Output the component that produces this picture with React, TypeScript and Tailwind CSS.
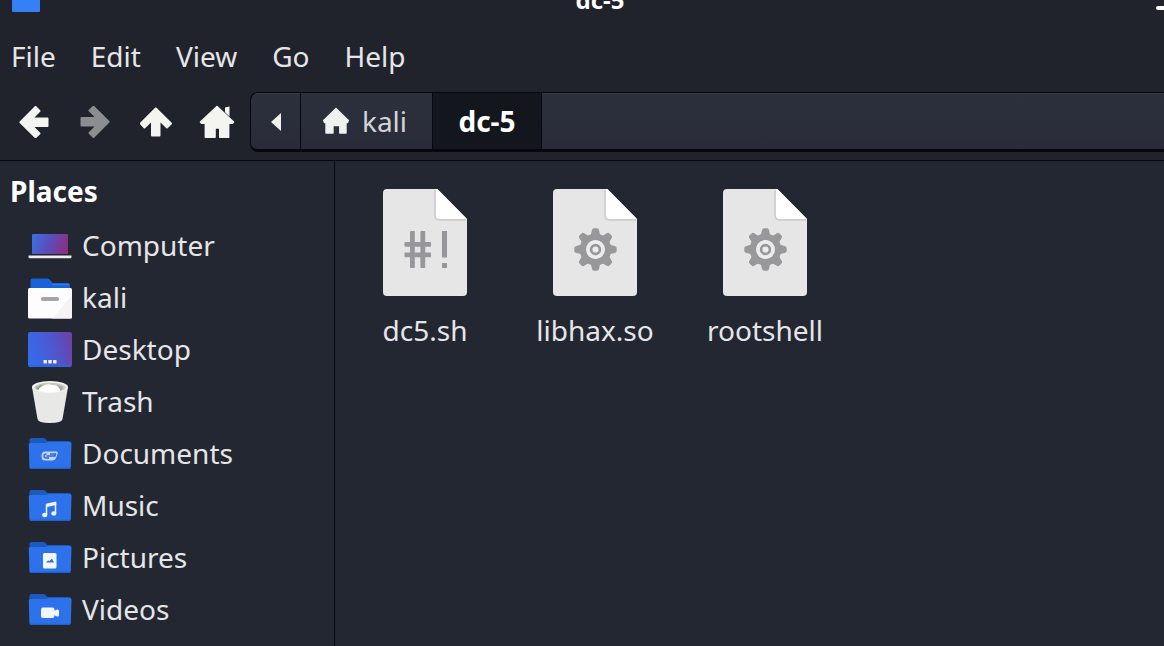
import type { ReactNode } from "react";

const menus = ["File", "Edit", "View", "Go", "Help"];

const arrowPath = "M17.5 1 L21.5 5 L14 12.5 H29.5 V20 H14 L21.5 27.5 L17.5 31.2 L2.4 16.2 Z";

function ArrowIcon({ className }: { className: string }) {
  return (
    <svg viewBox="0 0 32 32" className={className} aria-hidden="true">
      <path d={arrowPath} fill="currentColor" stroke="currentColor" strokeWidth="2" strokeLinejoin="round" />
    </svg>
  );
}

function HomeIcon() {
  return (
    <svg viewBox="0 0 36 34" className="h-[34px] w-9" fill="currentColor" aria-hidden="true">
      <path d="M26 2.5 L30.5 1.5 V11.5 L26 7.2 Z" />
      <path
        d="M18 1.5 L34.5 17 L33.4 18.2 H29.6 V32.2 H20.8 V23 H16 V32.2 H6.4 V18.2 H2.6 L1.5 17 Z"
        stroke="currentColor"
        strokeWidth="1.6"
        strokeLinejoin="round"
      />
    </svg>
  );
}

function SmallHomeIcon() {
  return (
    <svg viewBox="0 0 28 28" className="size-7" fill="currentColor" aria-hidden="true">
      <path
        d="M14 1.5 L26.3 13.5 L25.5 15.5 H24 V26 H17.8 V18.5 H11 V26 H4 V15.5 H2.5 L1.7 13.5 Z"
        stroke="currentColor"
        strokeWidth="1.4"
        strokeLinejoin="round"
      />
    </svg>
  );
}

function ComputerIcon() {
  return (
    <svg viewBox="0 0 44 44" className="size-11" aria-hidden="true">
      <defs>
        <linearGradient id="screen" x1="0" y1="0.4" x2="1" y2="0.6">
          <stop offset="0" stopColor="#3f6be0" />
          <stop offset="0.5" stopColor="#5d4bb5" />
          <stop offset="1" stopColor="#8c2f83" />
        </linearGradient>
      </defs>
      <path d="M4 12 a1 1 0 0 1 1-1 H39 a1 1 0 0 1 1 1 V32 H4 Z" fill="url(#screen)" />
      <path d="M4 31 H40 V32.5 H4 Z" fill="#22252f" />
      <path d="M0.5 32.5 H43.5 V34 a1.2 1.2 0 0 1 -1.2 1.2 H1.7 A1.2 1.2 0 0 1 0.5 34 Z" fill="#ededf0" />
    </svg>
  );
}

function HomeFolderIcon() {
  return (
    <svg viewBox="0 0 44 44" className="size-11" aria-hidden="true">
      <path d="M2.5 5.5 Q2.5 3.5 4.5 3.5 H19 Q21 3.5 22 5 L24.5 8 H40 Q42 8 42 10 V16 H2.5 Z" fill="#1b62d8" />
      <path d="M24 9.5 H41" stroke="#2e7cf2" strokeWidth="1.4" />
      <rect x="0" y="13" width="44" height="30.5" rx="1.5" fill="#fdfdfd" />
      <path d="M44 20 V42 a1.5 1.5 0 0 1 -1.5 1.5 H24 Z" fill="#f4f4f5" />
      <rect x="13" y="22" width="18" height="4" rx="1.8" fill="#a3a3a9" />
    </svg>
  );
}

function DesktopIcon() {
  return (
    <svg viewBox="0 0 44 44" className="size-11" aria-hidden="true">
      <defs>
        <linearGradient id="desk" x1="0" y1="0.6" x2="1" y2="0.35">
          <stop offset="0" stopColor="#346bec" />
          <stop offset="0.5" stopColor="#4a5bd3" />
          <stop offset="1" stopColor="#6a42ab" />
        </linearGradient>
      </defs>
      <rect x="0" y="5" width="44" height="35" rx="2" fill="url(#desk)" />
      <path d="M1 39 H43" stroke="#2c66de" strokeWidth="1.4" />
      <rect x="15.5" y="33" width="3.4" height="3.4" rx="0.6" fill="#f1f1f8" />
      <rect x="20.3" y="33" width="3.4" height="3.4" rx="0.6" fill="#f1f1f8" />
      <rect x="25.1" y="33" width="3.4" height="3.4" rx="0.6" fill="#f1f1f8" />
    </svg>
  );
}

function TrashIcon() {
  return (
    <svg viewBox="0 0 44 44" className="size-11" aria-hidden="true">
      <path d="M4 8 L9.5 40 Q10 44 22 44 Q34 44 34.5 40 L40 8 Z" fill="#e8e8e6" />
      <ellipse cx="22" cy="8" rx="18" ry="6" fill="#f2f2f0" />
      <ellipse cx="22" cy="8.4" rx="15.5" ry="4.6" fill="#c9c6bd" />
      <path d="M8 9 L13 5.5 L16 8 L11 12 Z" fill="#7fa98f" />
      <path d="M29 6 L35 8 L34 11 L30 12 Z" fill="#8fb3a0" />
      <path d="M11 6 L15 4.8 L18 7 Z" fill="#d8bd7c" />
      <path d="M10 12 Q11 8 15 7 Q19 4 24 6 Q30 6 31 9 Q33 11 32 12.4 Q22 14.6 10 12 Z" fill="#ffffff" />
    </svg>
  );
}

function FolderIcon({ children }: { children: ReactNode }) {
  return (
    <svg viewBox="0 0 44 44" className="size-11" aria-hidden="true">
      <path d="M1.5 9 Q1.5 7 3.5 7 H15 Q16.5 7 17.5 8 L19.5 10 H41 Q43 10 43 12 V20 H1.5 Z" fill="#1c5ac0" />
      <path d="M0.8 13.5 Q0.8 12 2.3 12 H16 Q18 12 19 11.4 Q20 11 21.5 11 H42 Q43.5 11 43.5 12.5 L42.8 36 Q42.7 38 41 38 H3.2 Q1.5 38 1.4 36 Z" fill="#2d72ea" />
      <path d="M2 37.3 H42" stroke="#2060cf" strokeWidth="1.2" />
      {children}
    </svg>
  );
}

function FileShape({ children }: { children: ReactNode }) {
  return (
    <svg viewBox="0 0 84 107" className="h-[107px] w-[84px]" aria-hidden="true">
      <path d="M4 0 H54 L84 30 V103 a4 4 0 0 1 -4 4 H4 a4 4 0 0 1 -4 -4 V4 a4 4 0 0 1 4 -4 Z" fill="#e6e6e7" />
      <path d="M52 1 V26 Q52 31 57 31 H83" fill="none" stroke="#c9c9cc" strokeWidth="1.4" />
      <path d="M53 0 H54.5 L84 30 H57 Q53 30 53 26 Z" fill="#ffffff" />
      {children}
    </svg>
  );
}

function ScriptFileIcon() {
  return (
    <FileShape>
      <g fill="#97979b">
        <rect x="27" y="42" width="4.8" height="37" rx="0.8" />
        <rect x="37.4" y="42" width="4.8" height="37" rx="0.8" />
        <rect x="21.5" y="53" width="26.5" height="4.8" rx="0.8" />
        <rect x="21.5" y="63.5" width="26.5" height="4.8" rx="0.8" />
        <rect x="59" y="42" width="5" height="26.5" />
        <rect x="59" y="74" width="5" height="5" />
      </g>
    </FileShape>
  );
}

function GearFileIcon() {
  const teeth = [0, 45, 90, 135, 180, 225, 270, 315];
  return (
    <FileShape>
      <g transform="translate(42.5 60.5)">
        {teeth.map((angle) => (
          <path
            key={angle}
            d="M-6 -13 Q-4 -15 -3.6 -19 Q-3.2 -21.2 -1.5 -21.2 H1.5 Q3.2 -21.2 3.6 -19 Q4 -15 6 -13 Z"
            fill="#98989b"
            transform={`rotate(${angle})`}
          />
        ))}
        <circle r="12.5" fill="none" stroke="#98989b" strokeWidth="6.6" />
        <circle r="9.4" fill="#ececec" />
        <circle r="4.4" fill="none" stroke="#98989b" strokeWidth="2.6" />
      </g>
    </FileShape>
  );
}

const places = [
  { name: "Computer", icon: <ComputerIcon /> },
  { name: "kali", icon: <HomeFolderIcon /> },
  { name: "Desktop", icon: <DesktopIcon /> },
  { name: "Trash", icon: <TrashIcon /> },
  {
    name: "Documents",
    icon: (
      <FolderIcon>
        <path d="M17 20.5 H28 Q30.5 20.5 29.5 23 L28 27 Q27 29.5 24.5 29.5 H17 Q13.5 29.5 13.5 25 Q13.5 20.5 17 20.5 Z" fill="#bfd5fa" />
        <path d="M18.5 23 Q16 23 16 25 Q16 27 18.5 27 H21 M18.5 25 H27 L27.5 23 H22" fill="none" stroke="#2d66d0" strokeWidth="1.4" />
      </FolderIcon>
    ),
  },
  {
    name: "Music",
    icon: (
      <FolderIcon>
        <path d="M18.5 32 V22 L27.5 20 V30" fill="none" stroke="#eef4ff" strokeWidth="1.5" />
        <path d="M18 20.8 L28.2 18.5 V22 L18 24.3 Z" fill="#eef4ff" />
        <ellipse cx="16.7" cy="32" rx="2.6" ry="2.2" fill="#eef4ff" />
        <ellipse cx="25.8" cy="30.4" rx="2.6" ry="2.2" fill="#eef4ff" />
      </FolderIcon>
    ),
  },
  {
    name: "Pictures",
    icon: (
      <FolderIcon>
        <rect x="15" y="18" width="13.5" height="15.5" rx="1.5" fill="#f2f6ff" />
        <path d="M18 27.5 L20 25.5 L21.5 26 L24 23.5 L26 27.5 Z" fill="#3f6fc4" />
      </FolderIcon>
    ),
  },
  {
    name: "Videos",
    icon: (
      <FolderIcon>
        <rect x="13" y="20.5" width="13.5" height="10.5" rx="2" fill="#f2f6ff" />
        <path d="M26 24 L29 22.5 Q31 22 31 24 V28 Q31 30 29 29.5 L26 28 Z" fill="#f2f6ff" />
      </FolderIcon>
    ),
  },
];

const files = [
  { name: "dc5.sh", icon: <ScriptFileIcon /> },
  { name: "libhax.so", icon: <GearFileIcon /> },
  { name: "rootshell", icon: <GearFileIcon /> },
];

function TitleBar() {
  return (
    <header className="flex h-3 items-end overflow-hidden pl-3">
      <svg viewBox="0 0 28 24" className="h-6 w-7 shrink-0" aria-hidden="true">
        <path d="M0 2 a2 2 0 0 1 2 -2 H26 a2 2 0 0 1 2 2 V23 a1 1 0 0 1 -1 1 H1 a1 1 0 0 1 -1 -1 Z" fill="#3680f5" />
      </svg>
      <h1 className="flex-1 pl-1 text-center text-2xl/6 font-bold text-white">dc-5</h1>
      <button type="button" aria-label="Minimize" className="flex h-3 w-2 items-center pt-1">
        <span className="h-1 w-full rounded-l-sm bg-white" />
      </button>
    </header>
  );
}

function PathBar() {
  return (
    <nav
      aria-label="Path"
      className="ml-[3px] flex h-[60px] flex-1 overflow-hidden rounded-l-lg border border-r-0 border-b-3 border-[#07080d] bg-linear-to-b from-[#2c303d] to-[#292c38] text-[#f0f0ee]"
    >
      <button type="button" aria-label="Scroll left" className="flex w-[49px] items-center justify-center border-t border-[#363a47]">
        <svg viewBox="0 0 12 20" className="h-5 w-3" aria-hidden="true">
          <path d="M11 1 V19 L1 10 Z" fill="currentColor" />
        </svg>
      </button>
      <button
        type="button"
        className="flex w-[132px] items-center justify-center gap-3 border-l border-[#07080d] pr-1 text-[#d3d4d8]"
      >
        <span className="text-[#f0f0ee]">
          <SmallHomeIcon />
        </span>
        kali
      </button>
      <button
        type="button"
        aria-current="page"
        className="w-[110px] border-x border-[#07080d] bg-[#14161e] font-bold text-white"
      >
        dc-5
      </button>
      <div className="flex-1 border-t border-[#363a47]" />
    </nav>
  );
}

export default function App() {
  return (
    <div className="flex min-h-screen flex-col overflow-hidden bg-[#20232c] font-['Noto_Sans',sans-serif] text-[28px]/9 text-[#e6e6e8]">
      <TitleBar />

      <nav aria-label="Menu" className="flex gap-[35px] px-[11px] pt-[26px] pb-[18px]">
        {menus.map((menu) => (
          <button key={menu} type="button">
            {menu}
          </button>
        ))}
      </nav>

      <div className="flex items-center border-b border-[#07080d] pb-2 pl-[3px] text-[#f4f4f1]">
        <button type="button" aria-label="Back" className="flex w-[61px] justify-center">
          <ArrowIcon className="size-8" />
        </button>
        <button type="button" aria-label="Forward" disabled className="flex w-[61px] justify-center text-[#8b8d91]">
          <ArrowIcon className="size-8 rotate-180" />
        </button>
        <button type="button" aria-label="Up" className="flex w-[61px] justify-center">
          <ArrowIcon className="size-8 rotate-90" />
        </button>
        <button type="button" aria-label="Home" className="flex w-[61px] justify-center">
          <HomeIcon />
        </button>
        <PathBar />
      </div>

      <div className="flex flex-1 bg-[#232731]">
        <aside className="w-[335px] shrink-0 border-r border-[#07080d]">
          <h2 className="px-[10px] pt-3 pb-[10px] font-bold text-white">Places</h2>
          <ul>
            {places.map((place) => (
              <li key={place.name}>
                <a href="#" className="flex h-[52px] items-center gap-[10px] pl-7">
                  {place.icon}
                  {place.name}
                </a>
              </li>
            ))}
          </ul>
        </aside>

        <main className="flex flex-1 flex-wrap content-start pt-7 pl-[5px]">
          {files.map((file) => (
            <button key={file.name} type="button" className="flex w-[170px] flex-col items-center gap-4">
              {file.icon}
              {file.name}
            </button>
          ))}
        </main>
      </div>
    </div>
  );
}
